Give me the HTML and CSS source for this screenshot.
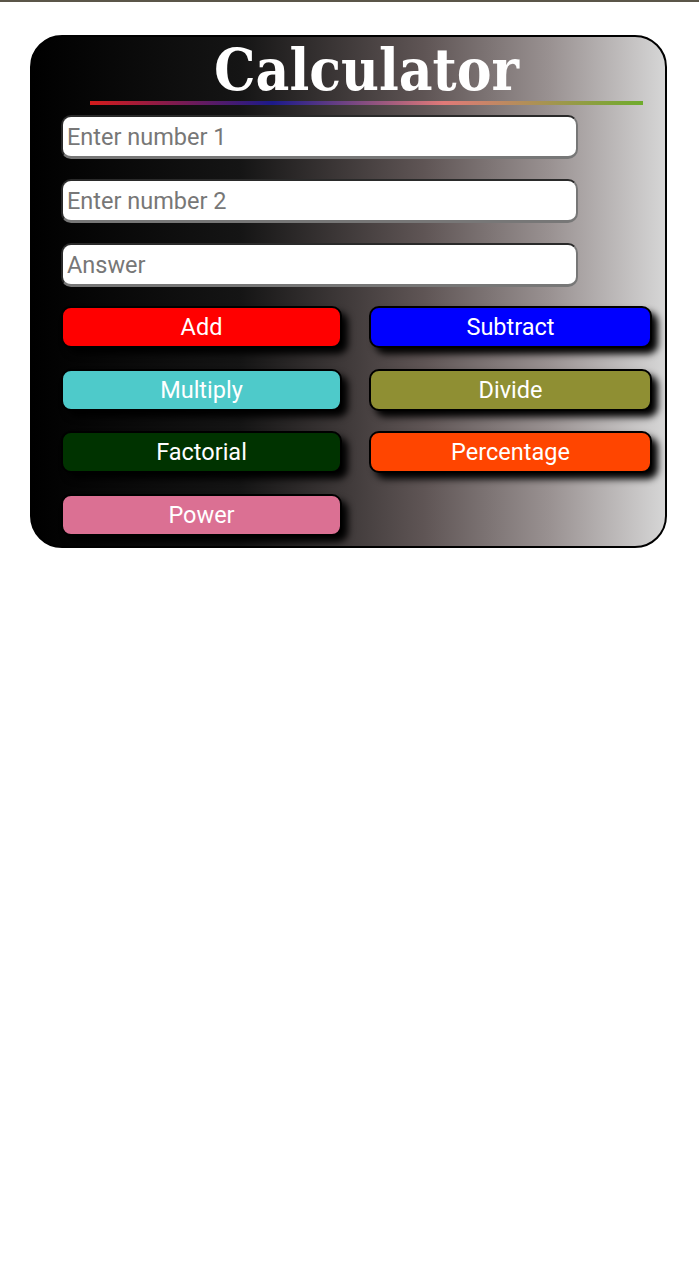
FILE: index.html
```html
<!DOCTYPE html>
<html lang="en">
<head>
<meta charset="utf-8">
<title>Calculator</title>
<link rel="stylesheet" href="styles.css">
</head>
<body>
<div class="topbar"></div>
<div class="card">
  <div class="header">
    <h1 class="title">Calculator</h1>
    <div class="rule"></div>
  </div>
  <div class="fields">
    <input class="field" type="text" placeholder="Enter number 1">
    <input class="field" type="text" placeholder="Enter number 2">
    <input class="field" type="text" placeholder="Answer">
  </div>
  <div class="buttons">
    <button class="btn btn-add">Add</button>
    <button class="btn btn-sub">Subtract</button>
    <button class="btn btn-mul">Multiply</button>
    <button class="btn btn-div">Divide</button>
    <button class="btn btn-fac">Factorial</button>
    <button class="btn btn-pct">Percentage</button>
    <button class="btn btn-pow">Power</button>
  </div>
</div>
</body>
</html>
```

FILE: styles.css
```css
html, body {
  margin: 0;
  padding: 0;
  background: #ffffff;
}

.topbar {
  height: 2px;
  background: #5b5649;
}

.card {
  margin: 33px 32px 0 30px;
  width: 637px;
  height: 513px;
  border: 2px solid #000;
  border-radius: 32px;
  background: linear-gradient(to right, #000 0%, #151515 33%, #5f5555 62%, #9a9292 82%, #d6d6d6 100%);
  box-sizing: border-box;
  padding-left: 29px;
}

.header {
  margin-left: 29px;
  width: 553px;
  display: flex;
  flex-direction: column;
  align-items: center;
}

.title {
  margin: 0;
  font-family: "DejaVu Serif", serif;
  font-stretch: condensed;
  font-weight: bold;
  font-size: 58px;
  line-height: 66px;
  color: #fff;
}

.rule {
  width: 553px;
  height: 4px;
  margin-top: -2px;
  background: linear-gradient(to right, #d41c1c 0%, #1c1a8a 33%, #e07a78 64%, #6fac2c 100%);
}

.fields {
  margin-top: 10px;
  display: flex;
  flex-direction: column;
  gap: 20px;
}

.field {
  width: 517px;
  height: 44px;
  box-sizing: border-box;
  border: 2px solid #2a2a2a;
  border-right-color: #777;
  border-bottom: 3px solid #777;
  border-radius: 10px;
  background: #fff;
  padding: 0 4px;
  font-family: Roboto, "Liberation Sans", sans-serif;
  font-size: 23.5px;
  color: #333;
  outline: none;
}

.field::placeholder {
  color: #777;
}

.buttons {
  margin-top: 19px;
  display: grid;
  grid-template-columns: 281px 283px;
  column-gap: 27px;
  row-gap: 20.7px;
}

.btn {
  height: 42px;
  border: 2px solid #000;
  border-radius: 10px;
  font-family: Roboto, "Liberation Sans", sans-serif;
  font-size: 23.5px;
  color: #fff;
  padding: 0;
  box-shadow: 6px 6px 7px #000;
}

.btn-add { background: #ff0000; }
.btn-sub { background: #0000ff; }
.btn-mul { background: #4ecaca; }
.btn-div { background: #8f8f33; }
.btn-fac { background: #003300; }
.btn-pct { background: #ff4500; }
.btn-pow { background: #db7093; }
```
